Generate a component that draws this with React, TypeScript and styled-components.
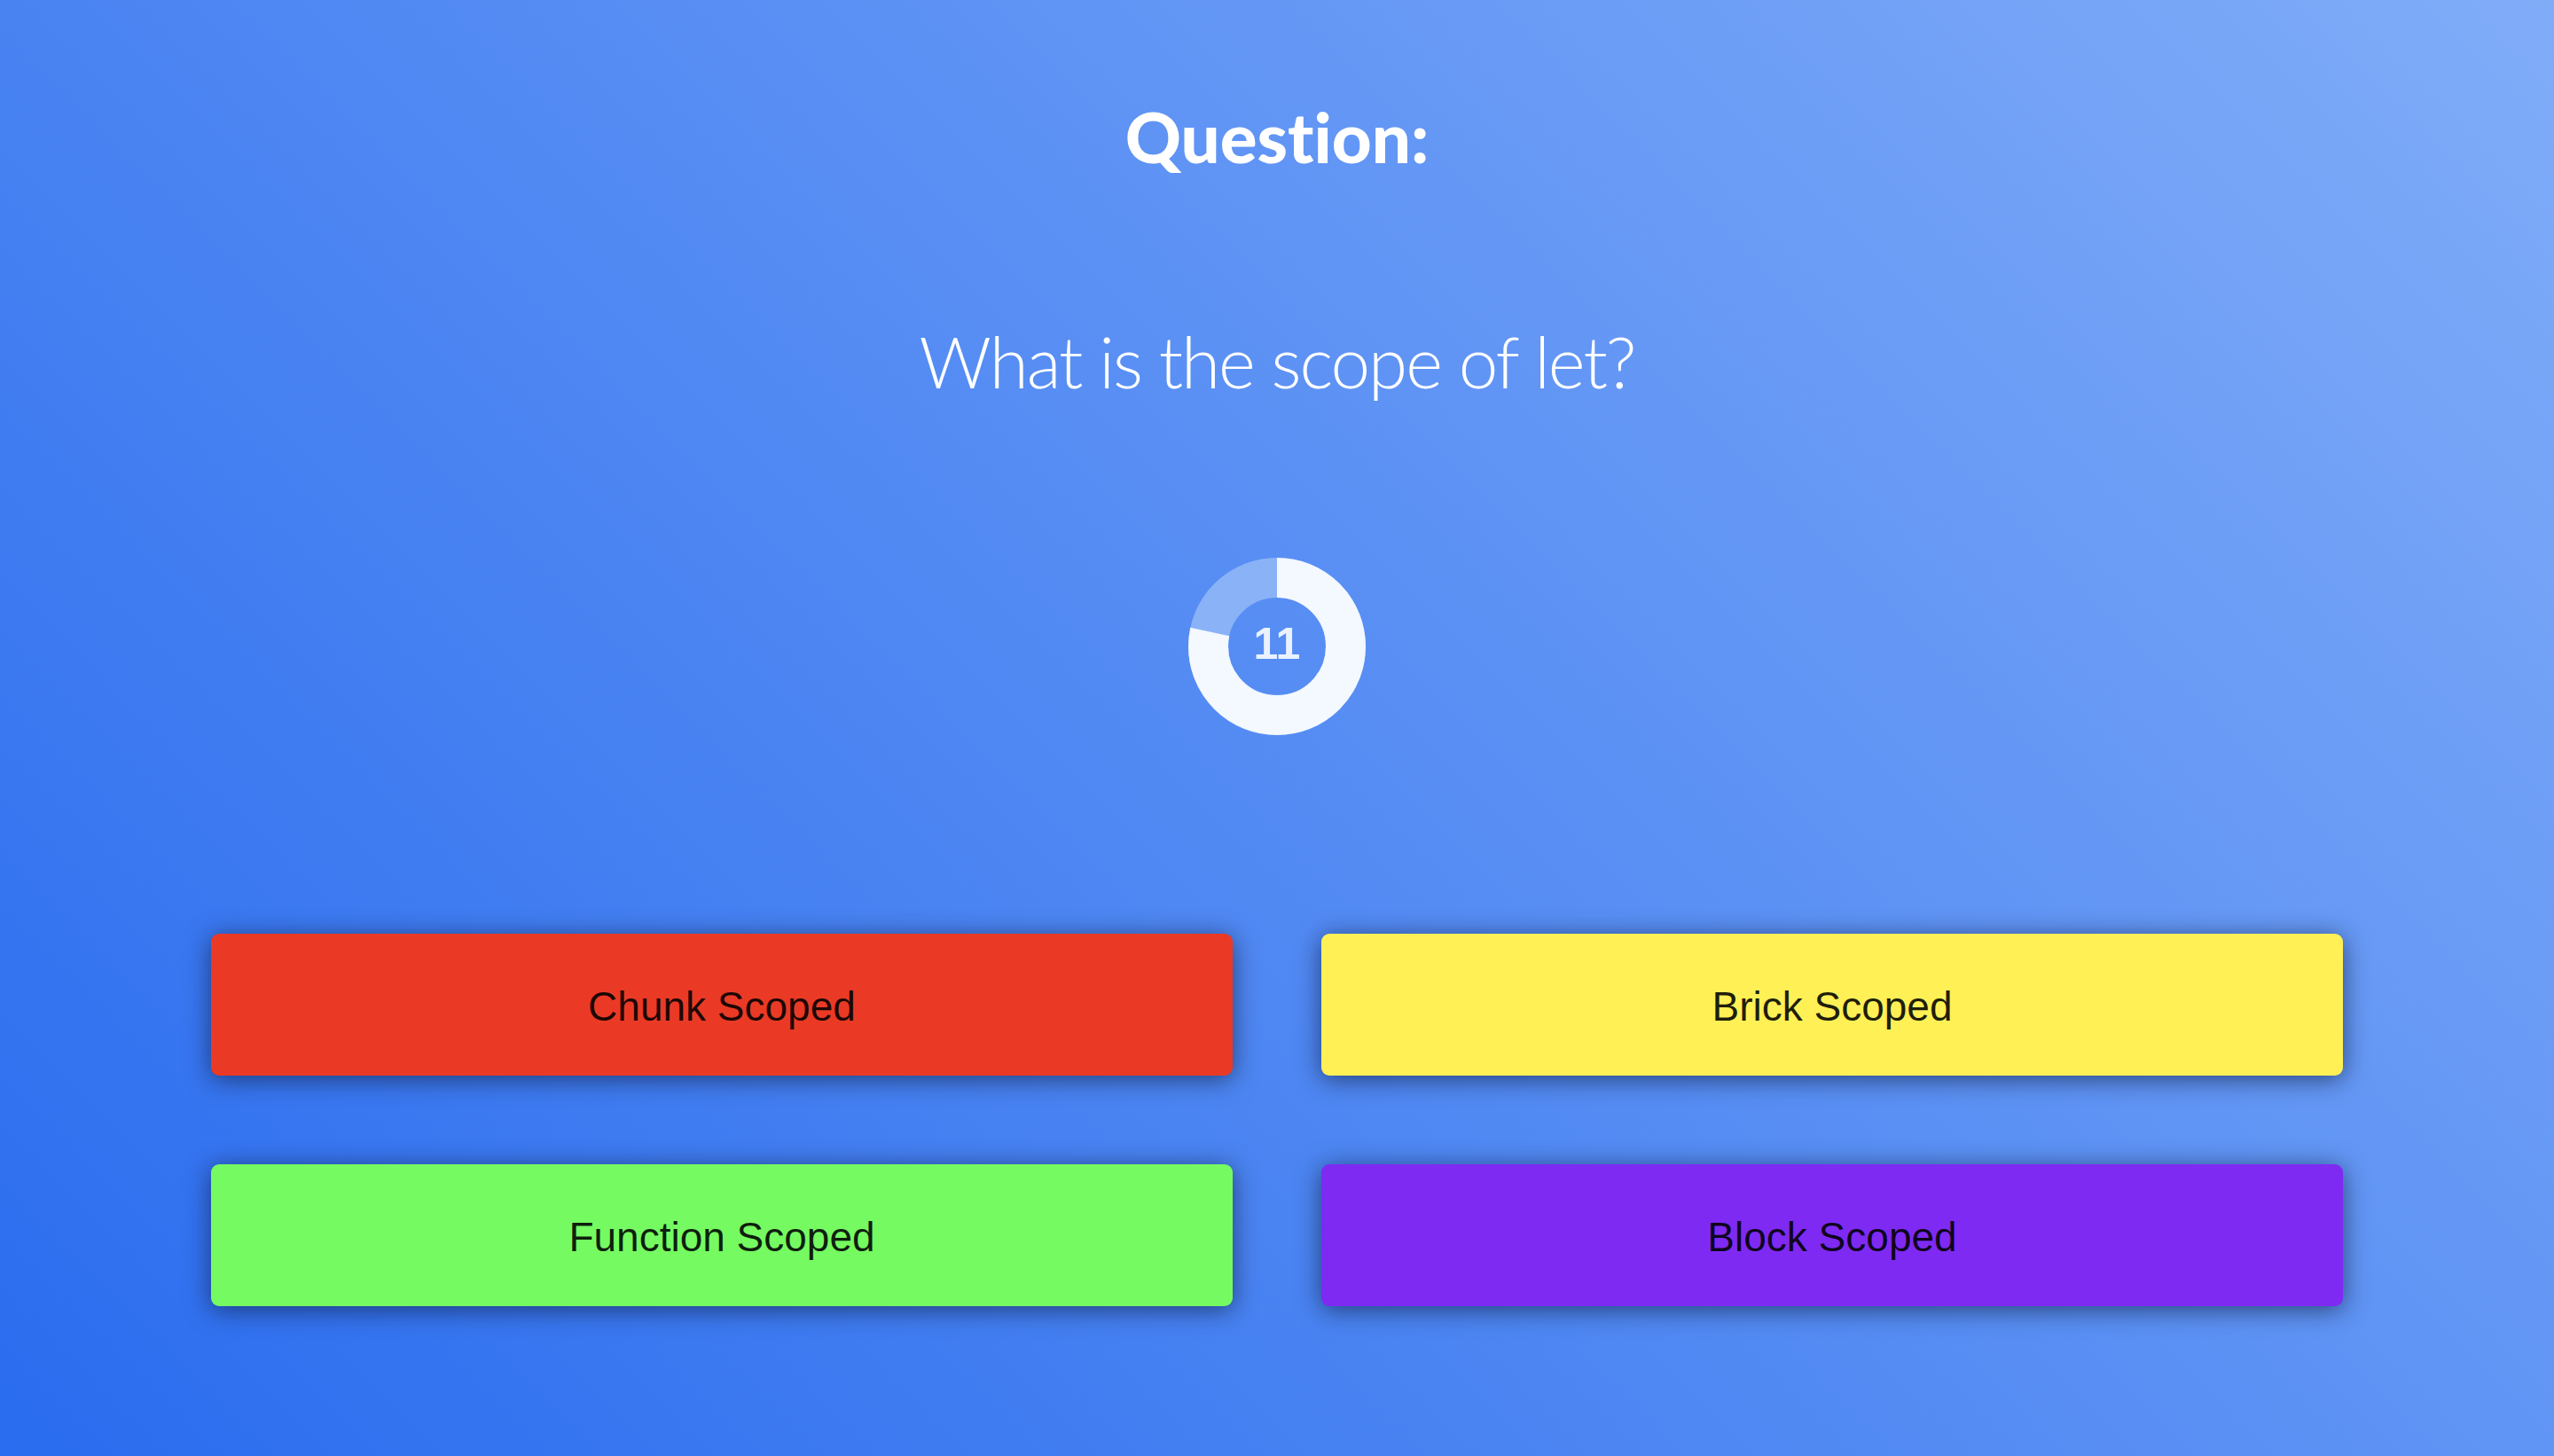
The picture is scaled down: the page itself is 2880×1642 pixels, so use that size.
import React from "react";
import styled, { createGlobalStyle } from "styled-components";

const GlobalStyle = createGlobalStyle`
  html, body { margin: 0; padding: 0; }
  body { font-family: "Liberation Sans", Arial, sans-serif; }
`;

const Page = styled.main`
  width: 100%;
  min-height: 1642px;
  box-sizing: border-box;
  background: linear-gradient(45deg, #2a6cef 0%, #80acf8 100%);
  display: flex;
  flex-direction: column;
  align-items: center;
  padding-top: 115px;
`;

const Title = styled.h1`
  margin: 0;
  font-family: Lato, "Open Sans", sans-serif;
  font-weight: 900;
  font-size: 78px;
  line-height: 1;
  color: #ffffff;
  font-variant-ligatures: none;
`;

const QuestionText = styled.h2`
  margin: 174px 0 0;
  font-family: Lato, "Open Sans", sans-serif;
  font-weight: 300;
  font-size: 80px;
  line-height: 1;
  letter-spacing: -2px;
  color: #ffffff;
  font-variant-ligatures: none;
`;

const TimerWrap = styled.div`
  position: relative;
  width: 200px;
  height: 200px;
  margin-top: 182px;
  display: flex;
  align-items: center;
  justify-content: center;
`;

const TimerSvg = styled.svg`
  position: absolute;
  inset: 0;
`;

const TimerValue = styled.span`
  position: relative;
  font-family: "Liberation Sans", Arial, sans-serif;
  font-weight: 700;
  font-size: 50px;
  line-height: 1;
  color: #eaf2ff;
  margin-top: -6px;
`;

const Answers = styled.div`
  margin-top: 224px;
  display: grid;
  grid-template-columns: repeat(2, 1152px);
  grid-auto-rows: 160px;
  column-gap: 100px;
  row-gap: 100px;
`;

const AnswerButton = styled.button<{ $bg: string }>`
  border: none;
  border-radius: 9px;
  background: ${(p) => p.$bg};
  box-shadow: 0 4px 28px rgba(15, 25, 55, 0.65);
  font-family: "Liberation Sans", Arial, sans-serif;
  font-size: 46px;
  color: rgba(0, 0, 0, 0.88);
  display: flex;
  align-items: center;
  justify-content: center;
  cursor: pointer;
  padding: 3px 0 0;
`;

const Timer: React.FC<{ value: number; fraction: number }> = ({ value, fraction }) => {
  const r = 77.5;
  const c = 2 * Math.PI * r;
  return (
    <TimerWrap>
      <TimerSvg width="200" height="200" viewBox="0 0 200 200">
        <circle cx="100" cy="100" r={r} fill="none" stroke="#8ab2f7" strokeWidth="45" />
        <circle
          cx="100"
          cy="100"
          r={r}
          fill="none"
          stroke="#f4f8ff"
          strokeWidth="45"
          strokeDasharray={`${c * fraction} ${c}`}
          transform="rotate(-90 100 100)"
        />
      </TimerSvg>
      <TimerValue>{value}</TimerValue>
    </TimerWrap>
  );
};

const answers = [
  { label: "Chunk Scoped", color: "#ea3a25" },
  { label: "Brick Scoped", color: "#fff056" },
  { label: "Function Scoped", color: "#75fa61" },
  { label: "Block Scoped", color: "#7e2af3" },
];

export default function App() {
  return (
    <>
      <GlobalStyle />
      <Page>
        <Title>Question:</Title>
        <QuestionText>What is the scope of let?</QuestionText>
        <Timer value={11} fraction={0.783} />
        <Answers>
          {answers.map((a) => (
            <AnswerButton key={a.label} $bg={a.color}>
              {a.label}
            </AnswerButton>
          ))}
        </Answers>
      </Page>
    </>
  );
}
